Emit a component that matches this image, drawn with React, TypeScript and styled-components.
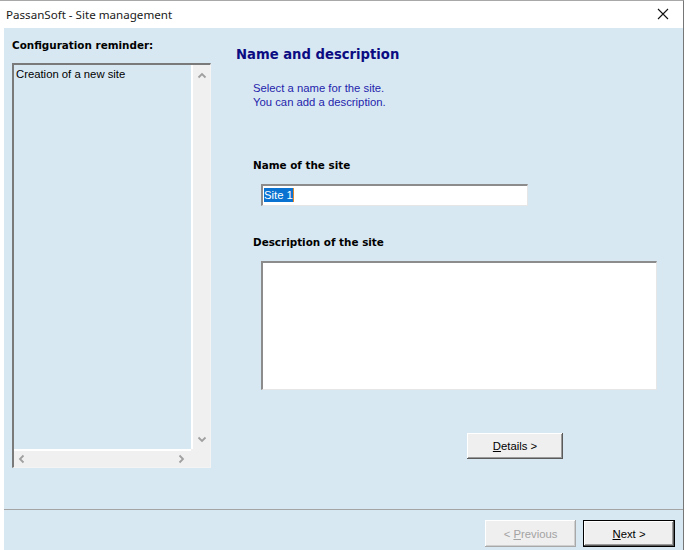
import React from "react";
import styled, { createGlobalStyle } from "styled-components";

const GlobalStyle = createGlobalStyle`
  html, body {
    margin: 0;
    padding: 0;
    background: #ffffff;
  }
  body {
    font-family: "Liberation Sans", Arial, sans-serif;
    font-size: 11.3px;
  }
`;

const Window = styled.div`
  box-sizing: border-box;
  width: 684px;
  height: 550px;
  border-top: 1px solid #a8a8a8;
  border-right: 1px solid #767676;
  background: #ffffff;
  display: flex;
  flex-direction: column;
  overflow: hidden;
`;

const TitleBar = styled.div`
  height: 27px;
  flex: none;
  display: flex;
  align-items: center;
  justify-content: space-between;
  padding: 0 14px 0 6px;
  font-family: "Noto Sans", "Open Sans", sans-serif;
  font-size: 11.6px;
  color: #1a1a1a;
`;

const CloseIcon = styled.svg`
  width: 12px;
  height: 12px;
  margin-top: -2px;
`;

const Client = styled.div`
  flex: 1;
  margin-left: 4px;
  background: #d8e8f2;
  display: flex;
  flex-direction: column;
`;

const Main = styled.div`
  height: 481px;
  display: flex;
  padding-left: 8px;
`;

const LeftColumn = styled.div`
  width: 199px;
  padding-top: 10px;
  display: flex;
  flex-direction: column;
`;

const BoldLabel = styled.div<{ $indent?: number; $top?: number }>`
  font-family: "DejaVu Sans", Verdana, sans-serif;
  font-weight: bold;
  font-size: 10.4px;
  line-height: 14px;
  color: #000000;
  margin-left: ${(p) => p.$indent ?? 0}px;
  margin-top: ${(p) => p.$top ?? 0}px;
`;

const ListBox = styled.div`
  box-sizing: border-box;
  margin-top: 11px;
  width: 199px;
  height: 405px;
  border-top: 2px solid #7a7a7a;
  border-left: 2px solid #7a7a7a;
  border-right: 1px solid #f4f4f4;
  border-bottom: 1px solid #f4f4f4;
  display: grid;
  grid-template-columns: 1fr 19px;
  grid-template-rows: 1fr 18px;
`;

const ListContent = styled.div`
  padding: 2px 0 0 2px;
  line-height: 14px;
  color: #000;
  font-size: 11.3px;
`;

const ScrollTrack = styled.div<{ $vertical?: boolean }>`
  background: #f0f0f0;
  display: flex;
  flex-direction: ${(p) => (p.$vertical ? "column" : "row")};
  justify-content: space-between;
  align-items: center;
  padding: ${(p) => (p.$vertical ? "6px 0 5px 0" : "0 5px 0 3px")};
  border-left: ${(p) => (p.$vertical ? "2px solid #ffffff" : "none")};
  border-top: ${(p) => (p.$vertical ? "none" : "2px solid #ffffff")};
`;

const Corner = styled.div`
  background: #f0f0f0;
`;

const Arrow = styled.svg`
  width: 10px;
  height: 10px;
`;

const RightColumn = styled.div`
  margin-left: 25px;
  padding-top: 19px;
  display: flex;
  flex-direction: column;
`;

const Heading = styled.div`
  font-family: "DejaVu Sans", Verdana, sans-serif;
  font-weight: bold;
  font-size: 13.2px;
  line-height: 16px;
  color: #0c0c82;
`;

const Hint = styled.div`
  margin: 18px 0 0 17px;
  line-height: 14px;
  color: #2424ac;
`;

const TextField = styled.div<{ $w: number; $h: number; $top: number }>`
  box-sizing: border-box;
  width: ${(p) => p.$w}px;
  height: ${(p) => p.$h}px;
  margin: ${(p) => p.$top}px 0 0 25px;
  background: #ffffff;
  border-top: 2px solid #8c8c8c;
  border-left: 2px solid #8c8c8c;
  border-right: 1px solid #e6e6e6;
  border-bottom: 1px solid #e6e6e6;
  padding: 2px 0 0 1px;
  line-height: 14px;
`;

const Selected = styled.span`
  background: #0a72d0;
  color: #ffffff;
  padding: 1px 0;
  border-right: 1px solid #e08a30;
`;

const ButtonRow = styled.div`
  display: flex;
  justify-content: flex-end;
  gap: 7px;
`;

const Button = styled.button<{ $default?: boolean; $disabled?: boolean }>`
  box-sizing: border-box;
  width: ${(p) => (p.$default ? 92 : 91)}px;
  height: 27px;
  padding: 0;
  font-family: "Liberation Sans", Arial, sans-serif;
  font-size: 11.3px;
  background: #efefef;
  color: ${(p) => (p.$disabled ? "#a3a3a3" : "#000000")};
  border: ${(p) => (p.$default ? "1px solid #000000" : "none")};
  box-shadow: ${(p) =>
    p.$disabled
      ? "inset -1px -1px #a8a8a8, inset 1px 1px #ffffff, inset -2px -2px #cfcfcf"
      : "inset -1px -1px #5a5a5a, inset 1px 1px #ffffff, inset -2px -2px #9a9a9a"};
`;

const DetailsButton = styled(Button)`
  width: 96px;
  height: 26px;
  margin: 43px 0 0 231px;
`;

const Footer = styled.div`
  flex: 1;
  border-top: 1px solid #a4a4a4;
  padding: 10px 8px 0 0;
`;

const Chevron = ({ rot }: { rot: number }) => (
  <Arrow viewBox="0 0 10 10">
    <polyline
      points="1.5,6.5 5,3 8.5,6.5"
      fill="none"
      stroke="#a0a0a0"
      strokeWidth="1.8"
      transform={`rotate(${rot} 5 5)`}
    />
  </Arrow>
);

const App: React.FC = () => {
  return (
    <>
      <GlobalStyle />
      <Window>
        <TitleBar>
          <span>PassanSoft - Site management</span>
          <CloseIcon viewBox="0 0 12 12">
            <path d="M1 1 L11 11 M11 1 L1 11" stroke="#111" strokeWidth="1.1" />
          </CloseIcon>
        </TitleBar>
        <Client>
          <Main>
            <LeftColumn>
              <BoldLabel>Configuration reminder:</BoldLabel>
              <ListBox>
                <ListContent>Creation of a new site</ListContent>
                <ScrollTrack $vertical>
                  <Chevron rot={0} />
                  <Chevron rot={180} />
                </ScrollTrack>
                <ScrollTrack>
                  <Chevron rot={-90} />
                  <Chevron rot={90} />
                </ScrollTrack>
                <Corner />
              </ListBox>
            </LeftColumn>
            <RightColumn>
              <Heading>Name and description</Heading>
              <Hint>
                Select a name for the site.
                <br />
                You can add a description.
              </Hint>
              <BoldLabel $indent={17} $top={49}>
                Name of the site
              </BoldLabel>
              <TextField $w={267} $h={22} $top={12}>
                <Selected>Site 1</Selected>
              </TextField>
              <BoldLabel $indent={17} $top={29}>
                Description of the site
              </BoldLabel>
              <TextField $w={396} $h={129} $top={12} />
              <DetailsButton>
                <u>D</u>etails &gt;
              </DetailsButton>
            </RightColumn>
          </Main>
          <Footer>
            <ButtonRow>
              <Button $disabled>
                &lt; <u>P</u>revious
              </Button>
              <Button $default>
                <u>N</u>ext &gt;
              </Button>
            </ButtonRow>
          </Footer>
        </Client>
      </Window>
    </>
  );
};

export default App;
